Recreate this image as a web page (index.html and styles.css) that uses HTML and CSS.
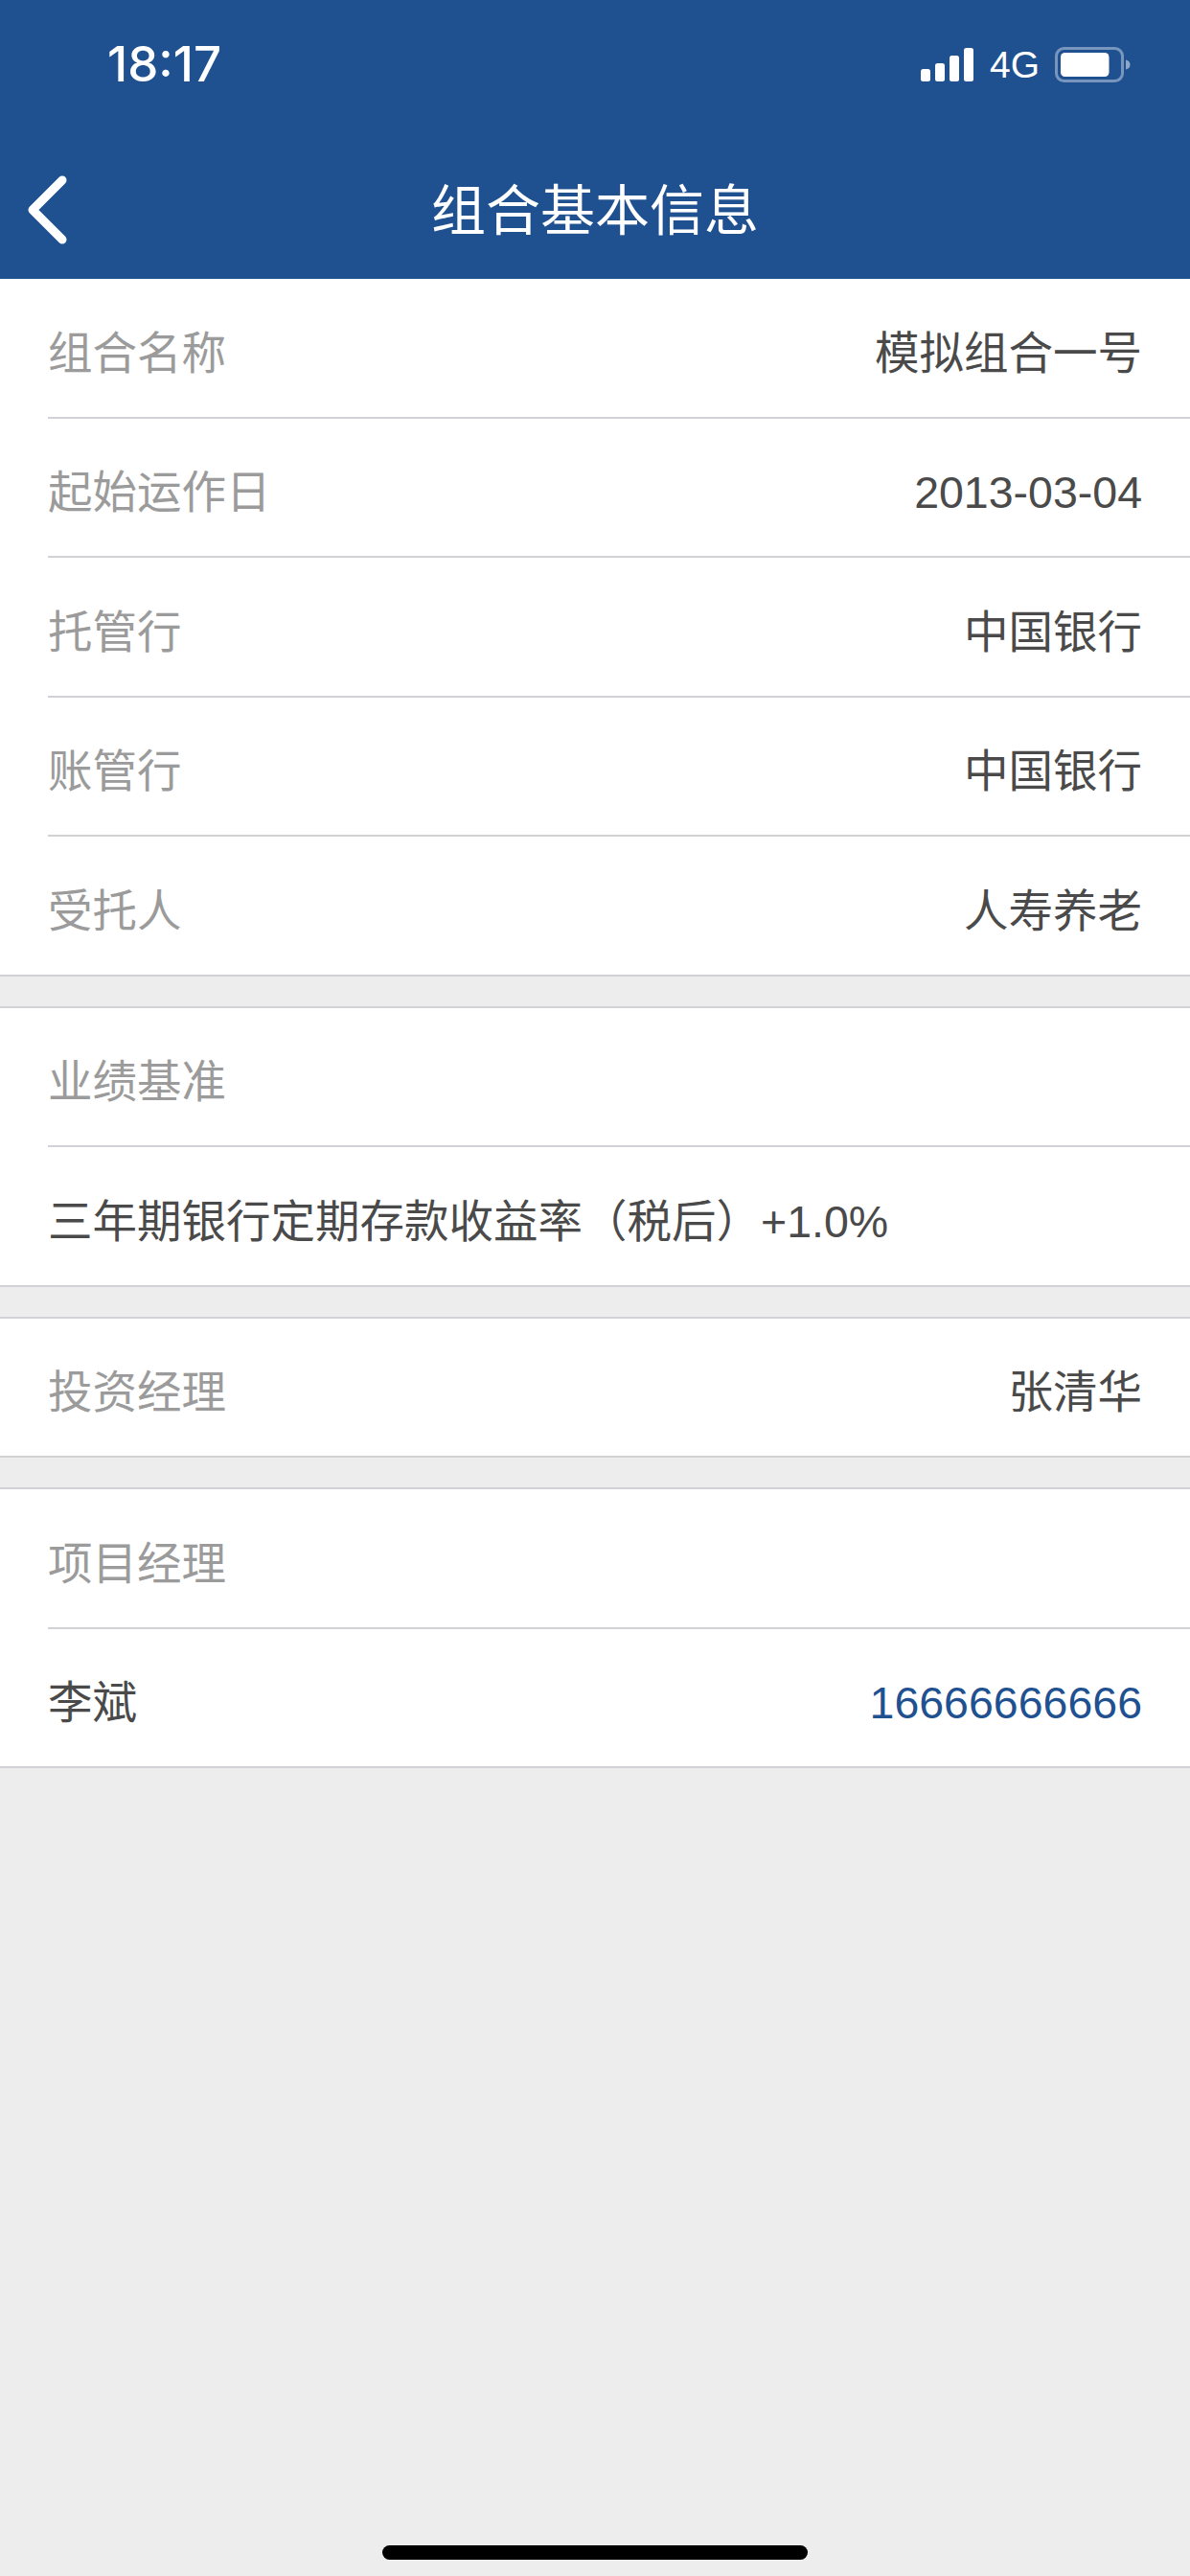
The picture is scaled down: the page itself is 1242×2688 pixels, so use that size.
FILE: index.html
```html
<!DOCTYPE html>
<html lang="zh-CN">
<head>
<meta charset="utf-8">
<title>组合基本信息</title>
<link rel="stylesheet" href="styles.css">
</head>
<body>
<div class="page">
  <header class="header">
    <div class="status">
      <span class="time">18:17</span>
      <div class="status-right">
        <svg class="signal" width="56" height="36" viewBox="0 0 56 36"><g fill="#fff"><rect x="0" y="22" width="10" height="13" rx="2.500"/><rect x="15" y="16" width="10" height="19" rx="2.500"/><rect x="30" y="8" width="10" height="27" rx="2.500"/><rect x="45" y="0" width="10" height="35" rx="2.500"/></g></svg>
        <span class="net">4G</span>
        <svg class="battery" width="80" height="38" viewBox="0 0 80 38"><rect x="1.500" y="1.500" width="69" height="34" rx="8" fill="none" stroke="#fff" stroke-opacity=".4" stroke-width="3"/><rect x="6" y="6" width="50.500" height="25" rx="4.500" fill="#fff"/><path d="M74 13.500c3 .6 4.500 2.500 4.500 5s-1.500 4.400-4.500 5z" fill="#fff" fill-opacity=".5"/></svg>
      </div>
    </div>
    <div class="nav">
      <svg class="back" width="44" height="72" viewBox="0 0 44 72"><path d="M37 5 6 36l31 31" fill="none" stroke="#fff" stroke-width="9" stroke-linecap="round" stroke-linejoin="round"/></svg>
      <h1 class="title">组合基本信息</h1>
    </div>
  </header>

  <section class="group first">
    <div class="row"><span class="label">组合名称</span><span class="value">模拟组合一号</span></div>
    <div class="row"><span class="label">起始运作日</span><span class="value">2013-03-04</span></div>
    <div class="row"><span class="label">托管行</span><span class="value">中国银行</span></div>
    <div class="row"><span class="label">账管行</span><span class="value">中国银行</span></div>
    <div class="row"><span class="label">受托人</span><span class="value">人寿养老</span></div>
  </section>

  <section class="group">
    <div class="row"><span class="label">业绩基准</span></div>
    <div class="row"><span class="value">三年期银行定期存款收益率（税后）+1.0%</span></div>
  </section>

  <section class="group">
    <div class="row"><span class="label">投资经理</span><span class="value">张清华</span></div>
  </section>

  <section class="group">
    <div class="row"><span class="label">项目经理</span></div>
    <div class="row"><span class="value">李斌</span><span class="value link">16666666666</span></div>
  </section>

  <div class="home-wrap"><div class="home"></div></div>
</div>
</body>
</html>
```
FILE: styles.css
```css
* { box-sizing: border-box; }
html, body { margin: 0; padding: 0; }
body {
  width: 1242px;
  height: 2688px;
  background: #ededed;
  font-family: "Liberation Sans", "Noto Sans CJK SC", sans-serif;
  overflow: hidden;
}
.page {
  height: 2688px;
  display: flex;
  flex-direction: column;
}
.header {
  height: 291px;
  background: #1f5191;
  color: #fff;
  flex: none;
}
.status {
  height: 132px;
  display: flex;
  justify-content: space-between;
  align-items: flex-start;
  padding: 42px 61px 0 112px;
}
.time {
  font-family: Inter, "Liberation Sans", sans-serif;
  font-size: 51px;
  font-weight: 500;
  line-height: 50px;
}
.status-right {
  display: flex;
  align-items: center;
  gap: 16px;
  padding-top: 6px;
}
.net {
  font-size: 39px;
  line-height: 40px;
}
.nav {
  position: relative;
  height: 159px;
  display: flex;
  align-items: center;
  justify-content: center;
  padding-top: 16px;
}
.back {
  position: absolute;
  left: 28px;
  top: 51px;
}
.title {
  margin: 0;
  font-size: 57px;
  font-weight: 400;
  line-height: 70px;
}
.group {
  background: #fff;
  border-bottom: 2px solid #d2d2d6;
  border-top: 2px solid #d2d2d6;
  margin-top: 31px;
  flex: none;
}
.group.first {
  border-top: 0;
  margin-top: 0;
}
.row {
  height: 145.5px;
  margin-left: 50px;
  padding: 12px 50px 0 0;
  display: flex;
  align-items: center;
  justify-content: space-between;
  border-bottom: 2px solid #d2d2d6;
  font-size: 46.5px;
  line-height: 60px;
}
.row:last-child {
  border-bottom: 0;
  height: 143.5px;
}
.label { color: #9b9b9b; }
.value { color: #4a4a4a; }
.link { color: #1f5191; }
.home-wrap {
  margin-top: auto;
  padding-bottom: 17px;
  display: flex;
  justify-content: center;
}
.home {
  width: 444px;
  height: 15px;
  border-radius: 8px;
  background: #000;
}
```
